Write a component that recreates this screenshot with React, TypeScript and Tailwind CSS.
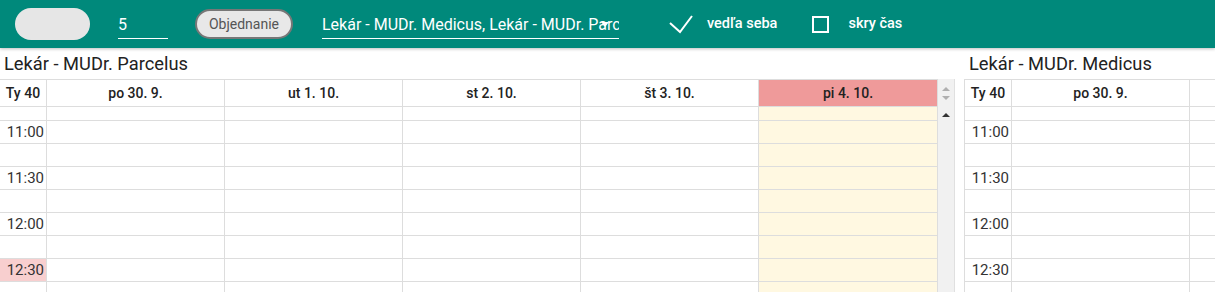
const days = ["po 30. 9.", "ut 1. 10.", "st 2. 10.", "št 3. 10.", "pi 4. 10."];
const rows = ["", "11:00", "", "11:30", "", "12:00", "", "12:30", ""];

type PanelProps = {
  title: string;
  today?: number;
  nowRow?: number;
  scroll?: boolean;
  bordered?: boolean;
};

const dayWidth = (i: number) => (i === 4 ? "w-[179px]" : "w-[178px]");

const Panel = ({ title, today, nowRow, scroll, bordered }: PanelProps) => {
  return (
    <div className="flex flex-col shrink-0">
      <div className={`h-[31px] flex items-center text-[18.3px] text-[#222] ${bordered ? "pl-[5px]" : "pl-[4px]"}`}>
        {title}
      </div>
      <div className="flex">
        <div className={`flex flex-col ${bordered ? "border-l border-[#ddd]" : ""}`}>
          {/* header */}
          <div className="flex h-[28px] border-t border-b border-[#ddd] text-[14px] font-medium text-[#222]">
            <div className="w-[47px] shrink-0 border-r border-[#ddd] flex items-center justify-center">Ty 40</div>
            {days.map((d, i) => (
              <div
                key={d}
                className={`${dayWidth(i)} shrink-0 border-r border-[#ddd] flex items-center justify-center ${
                  today === i ? "bg-[#ef9a9a]" : ""
                }`}
              >
                {d}
              </div>
            ))}
          </div>
          {/* body */}
          {rows.map((t, r) => (
            <div key={r} className={`flex border-b border-[#ddd] ${r === 0 ? "h-[14px]" : "h-[23px]"}`}>
              <div
                className={`w-[47px] shrink-0 border-r border-[#ddd] flex items-center justify-end pr-[2px] text-[15px] text-[#333] ${
                  nowRow === r ? "bg-[#f8cfcf]" : ""
                }`}
              >
                {t}
              </div>
              {days.map((d, i) => (
                <div
                  key={d}
                  className={`${dayWidth(i)} shrink-0 border-r border-[#ddd] ${today === i ? "bg-[#fff8e1]" : ""}`}
                />
              ))}
            </div>
          ))}
        </div>
        {scroll && (
          <div className="w-[17px] shrink-0 bg-[#f1f1f1] border-r border-[#e0e0e0] flex flex-col items-center">
            <div className="h-[28px] flex flex-col items-center justify-center gap-[5px]">
              <div className="w-0 h-0 border-l-[4px] border-r-[4px] border-b-[4px] border-l-transparent border-r-transparent border-b-[#b0b0b0]" />
              <div className="w-0 h-0 border-l-[4px] border-r-[4px] border-t-[4px] border-l-transparent border-r-transparent border-t-[#b0b0b0]" />
            </div>
            <div className="mt-[6px] w-0 h-0 border-l-[4px] border-r-[4px] border-b-[4px] border-l-transparent border-r-transparent border-b-[#333]" />
          </div>
        )}
      </div>
    </div>
  );
}

export default function App() {
  return (
    <div className="w-[1215px] h-[292px] overflow-hidden bg-white font-['Roboto',sans-serif]">
      <header className="relative z-10 h-12 bg-[#00897b] shadow-[0_1px_3px_rgba(0,0,0,0.25)] flex items-center text-white">
        <div className="ml-[15px] w-[75px] h-[32px] rounded-full bg-[#e6e6e6]" />
        <div className="ml-[28px] w-[50px] h-[30px] border-b border-white flex items-center text-[16px] pt-[2px]">5</div>
        <button className="ml-[27px] w-[98px] h-[30px] rounded-full bg-[#e8e8e8] border-2 border-[#777] text-[14px] text-[#555] flex items-center justify-center">
          Objednanie
        </button>
        <div className="relative ml-[29px] w-[297px] h-[30px] border-b border-white flex items-center text-[16px] whitespace-nowrap overflow-hidden pt-[2px]">
          Lekár - MUDr. Medicus, Lekár - MUDr. Parcelus
          <div className="absolute right-[10px] top-[13px] w-0 h-0 border-l-[4px] border-r-[4px] border-t-[5px] border-l-transparent border-r-transparent border-t-white" />
        </div>
        <svg className="ml-[49px]" width="26" height="22" viewBox="0 0 26 22" fill="none">
          <polyline points="2,10 12,19 24,3" stroke="white" strokeWidth="2" />
        </svg>
        <span className="ml-[13px] text-[14.5px] font-medium">vedľa seba</span>
        <div className="ml-[35px] w-[17px] h-[17px] border-2 border-white" />
        <span className="ml-[19px] text-[14.5px] font-medium">skry čas</span>
      </header>
      <div className="flex">
        <Panel title="Lekár - MUDr. Parcelus" today={4} nowRow={7} scroll />
        <div className="w-[9px] shrink-0" />
        <Panel title="Lekár - MUDr. Medicus" bordered />
      </div>
    </div>
  );
}
